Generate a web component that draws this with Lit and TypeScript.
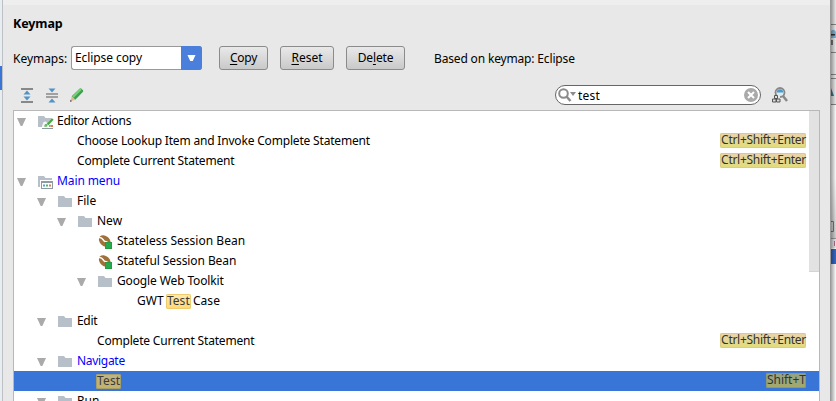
import { LitElement, html, css, svg, nothing } from "lit";
import { customElement, property } from "lit/decorators.js";
import { classMap } from "lit/directives/class-map.js";
import { styleMap } from "lit/directives/style-map.js";

type Icon = "folder" | "editor" | "menu" | "bean";
interface Row {
  level: number;
  label: string;
  icon?: Icon;
  changed?: boolean;
  keys?: string;
  selected?: boolean;
  spacing?: number;
}

const rows: Row[] = [
  { level: 0, label: "Editor Actions", icon: "editor", spacing: -0.28 },
  { level: 1, label: "Choose Lookup Item and Invoke Complete Statement", keys: "Ctrl+Shift+Enter", spacing: -0.18 },
  { level: 1, label: "Complete Current Statement", keys: "Ctrl+Shift+Enter", spacing: -0.19 },
  { level: 0, label: "Main menu", icon: "menu", changed: true, spacing: -0.1 },
  { level: 1, label: "File", icon: "folder" },
  { level: 2, label: "New", icon: "folder" },
  { level: 3, label: "Stateless Session Bean", icon: "bean", spacing: 0.02 },
  { level: 3, label: "Stateful Session Bean", icon: "bean", spacing: -0.08 },
  { level: 3, label: "Google Web Toolkit", icon: "folder", spacing: -0.13 },
  { level: 4, label: "GWT Test Case", spacing: 0.05 },
  { level: 1, label: "Edit", icon: "folder", spacing: -0.3 },
  { level: 2, label: "Complete Current Statement", keys: "Ctrl+Shift+Enter", spacing: -0.19 },
  { level: 1, label: "Navigate", icon: "folder", changed: true, spacing: -0.3 },
  { level: 2, label: "Test", keys: "Shift+T", selected: true, spacing: 0.15 },
  { level: 1, label: "Run", icon: "folder" },
];

const folder = svg`<path d="M0 2h6l1.500 2H14v9H0z" fill="#b7c0c8"/>`;
const icons = {
  folder: svg`${folder}`,
  editor: svg`${folder}
    <path d="M4 15v-3l1.500-4 2-.5L9.500 9 14 4h2v11z" fill="#fff" opacity=".85"/>
    <path d="M14.800 5L9.500 10.500" fill="none" stroke="#49a843" stroke-width="2.400"/>
    <path d="M6 12.500l1-2.500h1.800l.8 1.500-1.300 1.500z" fill="#6cba65"/>
    <path d="M11 12h1.500" stroke="#49a843" stroke-width="1.500"/><path d="M12.500 12h2.500" stroke="#e8784c" stroke-width="2"/>
    <path d="M4 14.500h11" stroke="#8a98a2"/>`,
  menu: svg`${folder}
    <rect x="2" y="6" width="14" height="9" fill="#fff"/>
    <rect x="3.500" y="7.500" width="11" height="7" fill="#fff" stroke="#8d9ba5"/>
    <path d="M3 8h12" stroke="#8d9ba5" stroke-width="2"/>
    <path d="M5 10.500h2v2H5z" fill="#4ba7ce"/><path d="M8 10.500h2v2H8z" fill="#5db45a"/><path d="M11 10.500h2v2h-2z" fill="#e8784c"/>`,
  bean: svg`
    <ellipse cx="6.800" cy="7" rx="6.600" ry="4.900" transform="rotate(42 6.800 7)" fill="#a0713b"/>
    <path d="M1 3.500c4.500-.5 3.500 3.500 6 4s3 1 4.500 4.500" fill="none" stroke="#fff" stroke-width="1.500"/>
    <rect x="7" y="8" width="7" height="7" fill="#27aa4b"/><rect x="7.500" y="8.500" width="6" height="6" fill="none" stroke="#239b44"/>`,
};

@customElement("keymap-row")
class KeymapRow extends LitElement {
  @property({ attribute: false }) row!: Row;

  static styles = css`
    :host { display: block; height: 20px; }
    .row { display: flex; align-items: flex-start; height: 20px; padding-right: 13px; }
    .selected { background: #3875d7; }
    .arrow { width: 9px; height: 20px; margin: 0 12px 0 3px; flex: none; }
    .icon { width: 16px; height: 16px; margin: 3px 3px 0 0; flex: none; }
    .bean { margin-left: 4px; }
    .label { flex: 1; white-space: pre; line-height: 20px; height: 20px; }
    .changed { color: #00f; }
    .leaf { margin-left: 3px; }
    .hit { display: inline-block; box-sizing: border-box; line-height: 13px; height: 15px; margin: 3px -1px 0; padding: 0 1px; border-radius: 2px; color: #3b3b3b; background: linear-gradient(#ffebb4, #ffd76f); box-shadow: inset 0 0 0 1px #efcb6e; vertical-align: top; }
    .selected .hit { background: linear-gradient(#bdb48c, #c4b264); box-shadow: inset 0 0 0 1px #a89f68; }
    .keys { box-sizing: border-box; height: 15px; line-height: 13px; margin-top: 2px; padding: 0 0 0 1px; border-radius: 2px; color: #333; background: linear-gradient(#ebd4ad, #e0dc78); box-shadow: inset 0 0 0 1px #d9cd85; white-space: nowrap; letter-spacing: -0.28px; }
    .selected .keys { background: linear-gradient(#95a188, #a4aa68); box-shadow: inset 0 0 0 1px #8b9a70; letter-spacing: 0; }
  `;

  render() {
    const r = this.row;
    const hasArrow = !!r.icon && r.icon !== "bean";
    const offset = hasArrow ? 0 : r.icon ? 20 : 40;
    const parts = r.label.split(/(Test)/).filter((p) => p);
    return html`<div class=${classMap({ row: true, selected: !!r.selected })}
      style=${styleMap({ paddingLeft: `${r.level * 20 + offset}px` })}>
      ${hasArrow ? html`<svg class="arrow" viewBox="0 0 9 20"><path d="M0 7h9l-3.700 8h-1.600z" fill="#aaa"/></svg>` : nothing}
      ${r.icon
        ? html`<svg class=${classMap({ icon: true, bean: !hasArrow })} viewBox="0 0 16 16">${icons[r.icon]}</svg>`
        : nothing}
      <span class=${classMap({ label: true, changed: !!r.changed, leaf: !r.icon })}
        style=${styleMap({ letterSpacing: `${r.spacing ?? 0}px` })}
        >${parts.map((p) => (p === "Test" ? html`<span class="hit">${p}</span>` : p))}</span>
      ${r.keys ? html`<span class="keys">${r.keys}</span>` : nothing}
    </div>`;
  }
}

@customElement("app-root")
class AppRoot extends LitElement {
  static styles = css`
    :host { display: grid; grid-template-columns: 2px 829px 5px; width: 836px; height: 401px; overflow: hidden; font: 12px "Noto Sans", "Open Sans", sans-serif; color: #000; }
    .left { display: flex; flex-direction: column; background: #e8edf2; }
    .left i { height: 24px; margin-top: 66px; background: #3875d7; }
    .dialog { box-sizing: border-box; height: 401px; border-left: 1px solid #bcc0c4; border-right: 1px solid #999; background: #e8e8e8; box-shadow: inset 0 5px #eee; padding: 14px 10px 0; display: flex; flex-direction: column; overflow: hidden; }
    h1 { margin: 0; font-size: 12.500px; letter-spacing: -0.1px; line-height: 20px; height: 20px; }
    .bar { display: flex; align-items: center; height: 24px; margin-top: 12px; }
    .caption { width: 58px; white-space: nowrap; letter-spacing: -0.04px; }
    .combo { box-sizing: border-box; width: 131px; height: 24px; display: flex; justify-content: space-between; border: 1px solid #999; border-right: 0; border-radius: 3px; background: #fff; line-height: 22px; padding-left: 3px; letter-spacing: -0.08px; }
    .drop { width: 21px; height: 24px; margin-top: -1px; background: #4a7fdb; border-radius: 0 3px 3px 0; }
    .btn { box-sizing: border-box; height: 24px; border: 1px solid #8b8b8b; border-radius: 3px; background: linear-gradient(#e9e9e9, #c9c9c9); text-align: center; line-height: 22px; }
    .copy { width: 49px; margin-left: 17px; letter-spacing: -0.25px; }
    .reset { width: 54px; margin-left: 12px; }
    .delete { width: 59px; margin-left: 12px; letter-spacing: -0.15px; }
    u { text-underline-offset: 2px; text-decoration-skip-ink: none; }
    .based { margin-left: 29px; letter-spacing: -0.16px; }
    .tools { display: flex; align-items: center; height: 20px; margin-top: 15px; }
    .tool { width: 16px; height: 16px; flex: none; }
    .expand { margin-left: 6px; }
    .collapse { margin-left: 9px; }
    .pencil { margin-left: 9px; }
    .search { box-sizing: border-box; width: 206px; height: 20px; margin-left: 470px; border: 1px solid #666; border-radius: 10px; background: #fff; display: flex; align-items: center; }
    .search span { flex: 1; line-height: 20px; margin: 2px 0 0 2px; letter-spacing: 0.25px; }
    .glass { width: 20px; height: 18px; }
    .clear { width: 14px; height: 14px; margin-right: 2px; }
    .find { margin-left: 11px; }
    .tree { position: relative; box-sizing: border-box; width: 807px; height: 300px; margin-top: 5px; border: 1px solid #b8b8b8; border-bottom: 0; background: #fff; overflow: hidden; }
    .thumb { position: absolute; right: 0; top: 0; width: 10px; height: 161px; background: #e2e2e2; border-bottom: 1px solid #d4d4d4; box-sizing: border-box; }
    .right { width: 5px; height: 401px; display: block; }
  `;

  render() {
    return html`
      <div class="left"><i></i></div>
      <div class="dialog">
        <h1>Keymap</h1>
        <div class="bar">
          <span class="caption">Keymaps:</span>
          <div class="combo"><span>Eclipse copy</span>
            <svg class="drop" viewBox="0 0 21 24"><path d="M6.500 9h8l-2.700 6H9.200z" fill="#fff"/></svg>
          </div>
          <div class="btn copy"><u>C</u>opy</div>
          <div class="btn reset"><u>R</u>eset</div>
          <div class="btn delete">De<u>l</u>ete</div>
          <span class="based">Based on keymap: Eclipse</span>
        </div>
        <div class="tools">
          <svg class="tool expand" viewBox="0 0 16 16"><path d="M2 2h12M2 15h12" stroke="#888" stroke-width="1.800"/><path d="M8 3.500l3.500 4h-7zM8 13.500l3.500-4h-7z" fill="#4f94c4"/></svg>
          <svg class="tool collapse" viewBox="0 0 16 16"><path d="M2 7h12M2 10h12" stroke="#888" stroke-width="1.700"/><path d="M8 5.500l3.500-4h-7zM8 11.500l3.500 4h-7z" fill="#4f94c4"/></svg>
          <svg class="tool pencil" viewBox="0 0 16 16"><path d="M2.700 9.200L10.500 1.700q1-1 2 0l1.300 1.300q1 1 0 2L6.300 12.800z" fill="#3da04f"/><path d="M4 10l8-8" stroke="#79d17a" stroke-width="2"/><path d="M2.700 9.200l3.600 3.600-4.600 1.500z" fill="#e3b78d"/><path d="M1 14.800l.6-2 1.400 1.400z" fill="#444"/></svg>
          <div class="search">
            <svg class="glass" viewBox="0 0 20 18"><circle cx="7.500" cy="7.500" r="4.300" fill="none" stroke="#8b8b8b" stroke-width="2"/><path d="M10.500 10.500l4 4.500" stroke="#8b8b8b" stroke-width="2.500"/><path d="M14 6h6l-3 4z" fill="#8b8b8b"/></svg>
            <span>test</span>
            <svg class="clear" viewBox="0 0 14 14"><circle cx="7" cy="7" r="7" fill="#aaa"/><path d="M4 4l6 6M10 4l-6 6" stroke="#fff" stroke-width="2"/></svg>
          </div>
          <svg class="tool find" viewBox="0 0 16 16"><circle cx="8" cy="5.500" r="4.500" fill="#dceaf2" stroke="#888" stroke-width="1.800"/><path d="M4.800 5.500a3.200 3.200 0 0 1 6.400 0z" fill="#4d9ac8"/><path d="M11 9l4 5" stroke="#888" stroke-width="2.500"/><path d="M0 11h2V8h6v3h1v5H0z" fill="#e8e8e8"/><path d="M2.500 8.500h3v3h-3zM.5 12h3.500v3H.5zM4.500 12H8v3H4.500z" fill="#ddd" stroke="#555"/></svg>
        </div>
        <div class="tree">
          ${rows.map((r) => html`<keymap-row .row=${r}></keymap-row>`)}
          <div class="thumb"></div>
        </div>
      </div>
      <svg class="right" viewBox="0 0 5 401">
        <defs>
          <linearGradient id="shade" x1="0" x2="0" y1="0" y2="1"><stop offset="0" stop-color="#fafafa"/><stop offset="1" stop-color="#cfcfcf"/></linearGradient>
          <linearGradient id="edge"><stop offset="0" stop-opacity=".35"/><stop offset="1" stop-opacity="0"/></linearGradient>
        </defs>
        <rect width="5" height="401" fill="#fafafa"/>
        <rect width="5" height="105" fill="#e8e8e8"/>
        <path d="M0 24.500h5M0 52.500h5M0 74.500h5M0 78.500h5M0 104.500h5" stroke="#888"/>
        <path d="M0 31q3-3 5 1v6H0z" fill="#7fb4d6"/><path d="M0 34h4v1.500H0z" fill="#333"/><path d="M0 40h2v5H0z" fill="#777"/>
        <path d="M0 88l3 8H0z" fill="#397995"/>
        <rect y="178" width="5" height="60" fill="url(#shade)"/>
        <path d="M0 221.500h2.500v10H0" fill="none" stroke="#777"/>
        <path d="M0 238.500h5" stroke="#999"/><rect y="239" width="5" height="9" fill="#e5e5e5"/><path d="M3.500 241v5" stroke="#ad6b90"/>
        <rect y="249" width="5" height="15" fill="#3466c5"/>
        <rect width="5" height="401" fill="url(#edge)"/>
      </svg>
    `;
  }
}
